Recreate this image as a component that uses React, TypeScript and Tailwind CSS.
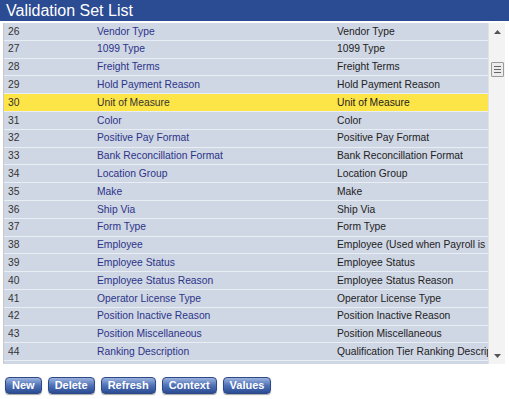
import React from "react";

const rows: [number, string, string][] = [
  [26, "Vendor Type", "Vendor Type"],
  [27, "1099 Type", "1099 Type"],
  [28, "Freight Terms", "Freight Terms"],
  [29, "Hold Payment Reason", "Hold Payment Reason"],
  [30, "Unit of Measure", "Unit of Measure"],
  [31, "Color", "Color"],
  [32, "Positive Pay Format", "Positive Pay Format"],
  [33, "Bank Reconcillation Format", "Bank Reconcillation Format"],
  [34, "Location Group", "Location Group"],
  [35, "Make", "Make"],
  [36, "Ship Via", "Ship Via"],
  [37, "Form Type", "Form Type"],
  [38, "Employee", "Employee (Used when Payroll is Installed)"],
  [39, "Employee Status", "Employee Status"],
  [40, "Employee Status Reason", "Employee Status Reason"],
  [41, "Operator License Type", "Operator License Type"],
  [42, "Position Inactive Reason", "Position Inactive Reason"],
  [43, "Position Miscellaneous", "Position Miscellaneous"],
  [44, "Ranking Description", "Qualification Tier Ranking Description"],
  [45, "ACH File Format", "ACH File Format"],
];

const Btn = ({ label }: { label: string }) => (
  <button className="h-[17px] px-[6px] rounded-[4px] border border-[#2c4a86] bg-gradient-to-b from-[#9cb2de] via-[#4f71b7] to-[#2b4c93] text-white text-[11px] font-bold leading-none shadow-[0_1px_1px_rgba(0,0,0,0.35)]">
    {label}
  </button>
);

export default function App() {
  return (
    <div className="w-[509px] h-[399px] bg-white overflow-hidden font-['Liberation_Sans',Arial,sans-serif]">
      {/* Title */}
      <div className="h-[21px] bg-[#2b4b93] text-white text-[16px] leading-[21px] pl-[6px]">
        Validation Set List
      </div>
      <div className="h-[2px] bg-white" />

      {/* Grid */}
      <div className="flex h-[341px] ml-[3px] mr-[4px]">
        <div className="flex-1 overflow-hidden border-l border-[#c8c8c8]">
          {rows.map(([id, name, desc]) => {
            const sel = id === 30;
            return (
              <div
                key={id}
                className={`flex h-[17.8px] items-center text-[10.3px] border-b border-[#e9edf4] whitespace-nowrap ${
                  sel ? "bg-[#fde447]" : "bg-[#cfd6e4]"
                }`}
              >
                <div className="w-[93px] pl-[4px] text-[#333333]">{id}</div>
                <div className={`w-[240px] overflow-hidden ${sel ? "text-[#333333]" : "text-[#2c3488]"}`}>{name}</div>
                <div className="flex-1 overflow-hidden text-[#222222]">{desc}</div>
              </div>
            );
          })}
        </div>
        {/* Scrollbar */}
        <div className="w-[17px] bg-[#f3f3f3] border-l border-[#e2e2e2] flex flex-col items-center">
          <div className="h-[17px] w-full flex items-center justify-center">
            <svg width="7" height="4" viewBox="0 0 7 4">
              <path d="M0 4 L3.5 0 L7 4 Z" fill="#555" />
            </svg>
          </div>
          <div className="mt-[22px] w-[13px] h-[15px] border border-[#9a9a9a] bg-[#ececec] rounded-[1px] flex flex-col items-center justify-center gap-[2px]">
            <div className="w-[7px] h-px bg-[#666]" />
            <div className="w-[7px] h-px bg-[#666]" />
            <div className="w-[7px] h-px bg-[#666]" />
          </div>
          <div className="flex-1" />
          <div className="h-[17px] w-full flex items-center justify-center">
            <svg width="7" height="4" viewBox="0 0 7 4">
              <path d="M0 0 L3.5 4 L7 0 Z" fill="#555" />
            </svg>
          </div>
        </div>
      </div>

      {/* Buttons */}
      <div className="flex gap-[6px] pl-[5px] mt-[13px]">
        <Btn label="New" />
        <Btn label="Delete" />
        <Btn label="Refresh" />
        <Btn label="Context" />
        <Btn label="Values" />
      </div>
    </div>
  );
}
